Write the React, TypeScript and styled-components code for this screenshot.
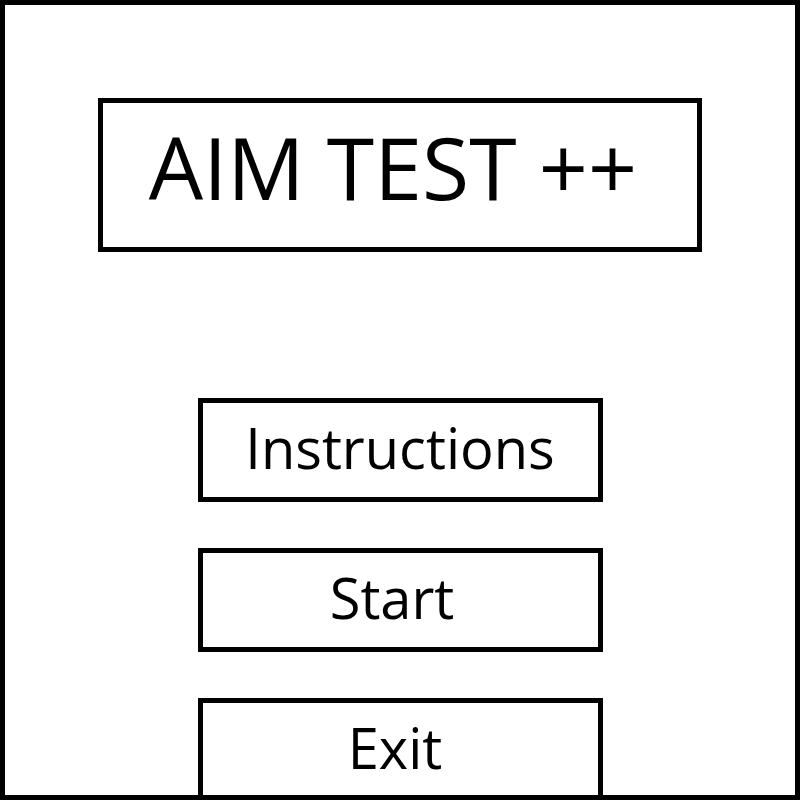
import React from 'react';
import styled, { createGlobalStyle } from 'styled-components';

const GlobalStyle = createGlobalStyle`
  html, body {
    margin: 0;
    padding: 0;
    background: #ffffff;
  }
  body {
    font-family: 'Open Sans', 'Liberation Sans', sans-serif;
    color: #000000;
  }
`;

const Frame = styled.div`
  width: 800px;
  height: 800px;
  box-sizing: border-box;
  border: 5px solid #000;
  overflow: hidden;
  display: flex;
  flex-direction: column;
  align-items: center;
  background: #fff;
`;

const TitleBox = styled.div`
  flex-shrink: 0;
  margin-top: 93px;
  width: 604px;
  height: 154px;
  box-sizing: border-box;
  border: 5px solid #000;
  display: flex;
  align-items: center;
  justify-content: center;
  padding: 0 14px 16px 0;
`;

const Title = styled.h1`
  margin: 0;
  font-size: 86px;
  font-weight: 400;
  line-height: 1;
  white-space: nowrap;
`;

const Menu = styled.nav`
  flex-shrink: 0;
  margin-top: 146px;
  display: flex;
  flex-direction: column;
  gap: 46px;
`;

const MenuButton = styled.button<{ $shift?: number }>`
  width: 405px;
  height: 104px;
  flex-shrink: 0;
  box-sizing: border-box;
  border: 5px solid #000;
  border-radius: 0;
  background: #fff;
  color: #000;
  font-family: 'Open Sans', 'Liberation Sans', sans-serif;
  font-size: 56px;
  line-height: 1;
  padding: 0 ${({ $shift }) => ($shift ? $shift * 2 : 0)}px 6px 0;
  cursor: pointer;
  display: flex;
  align-items: center;
  justify-content: center;
`;

function App() {
  return (
    <>
      <GlobalStyle />
      <Frame>
        <TitleBox>
          <Title>AIM TEST ++</Title>
        </TitleBox>
        <Menu>
          <MenuButton>Instructions</MenuButton>
          <MenuButton $shift={8}>Start</MenuButton>
          <MenuButton $shift={5}>Exit</MenuButton>
        </Menu>
      </Frame>
    </>
  );
}

export default App;
